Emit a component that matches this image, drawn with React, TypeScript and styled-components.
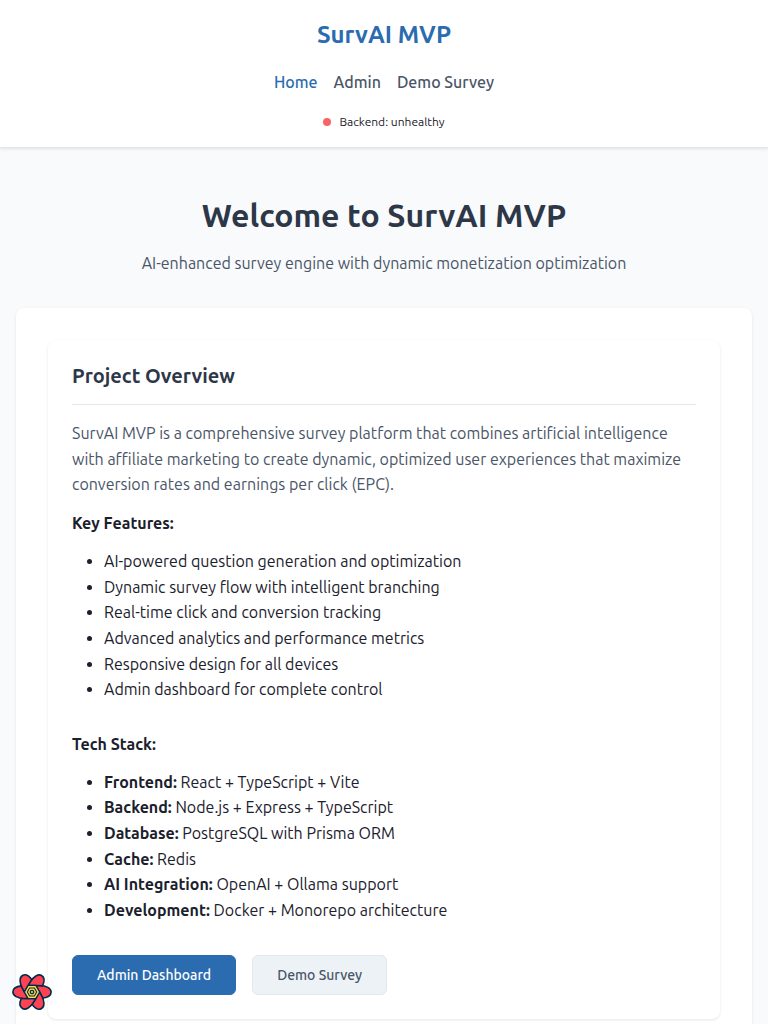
import React from 'react';
import styled, { createGlobalStyle, css } from 'styled-components';

const GlobalStyle = createGlobalStyle`
  *, *::before, *::after { box-sizing: border-box; margin: 0; padding: 0; }
  body {
    font-family: Ubuntu, "Open Sans", "Noto Sans", sans-serif;
    font-size: 16px;
    line-height: 1.6;
    color: #1a202c;
    background: #f8fafc;
  }
`;

const Header = styled.header`
  display: flex;
  flex-direction: column;
  align-items: center;
  gap: 16px;
  padding: 16px;
  background: #fff;
  border-bottom: 1px solid #e2e8f0;
  box-shadow: 0 1px 3px rgba(0, 0, 0, 0.1);
`;

const Brand = styled.div`
  font-size: 24px;
  font-weight: 700;
  color: #2b6cb0;
`;

const Nav = styled.nav`
  display: flex;
  gap: 16px;
`;

const NavLink = styled.a<{ $active?: boolean }>`
  font-weight: 500;
  text-decoration: none;
  color: ${({ $active }) => ($active ? '#2b6cb0' : '#4a5568')};
`;

const Status = styled.div`
  display: flex;
  align-items: center;
  gap: 8px;
  font-size: 12px;
`;

const StatusDot = styled.span`
  width: 8px;
  height: 8px;
  border-radius: 50%;
  background: #f56565;
`;

const Main = styled.main`
  padding: 48px 16px 32px;
`;

const Hero = styled.section`
  margin-bottom: 32px;
  text-align: center;
`;

const Title = styled.h1`
  margin-bottom: 16px;
  font-size: 32px;
  font-weight: 700;
  line-height: 1.2;
  color: #2d3748;
`;

const Subtitle = styled.p`
  color: #4a5568;
`;

const Panel = styled.section`
  padding: 32px;
  border-radius: 8px;
  background: #fff;
  box-shadow: 0 1px 3px rgba(0, 0, 0, 0.1);
`;

const Card = styled.article`
  padding: 24px;
  border-radius: 8px;
  background: #fff;
  box-shadow: 0 1px 3px rgba(0, 0, 0, 0.1);
`;

const CardTitle = styled.h2`
  margin-bottom: 16px;
  padding-bottom: 16px;
  border-bottom: 1px solid #e2e8f0;
  font-size: 20px;
  font-weight: 600;
  line-height: 1.2;
  color: #2d3748;
`;

const Summary = styled.p`
  margin-bottom: 12.8px;
  color: #4a5568;
`;

const ListHeading = styled.p<{ $tight?: boolean }>`
  margin-bottom: ${({ $tight }) => ($tight ? '12px' : '12.8px')};
  font-weight: 700;
`;

const List = styled.ul<{ $last?: boolean }>`
  margin-bottom: ${({ $last }) => ($last ? '32px' : '29.6px')};
  padding-left: 32px;
`;

const Actions = styled.div`
  display: flex;
  gap: 16px;
`;

const Button = styled.button<{ $primary?: boolean }>`
  height: 40px;
  padding: 0 24px;
  border: 1px solid #e2e8f0;
  border-radius: 6px;
  font: 500 14px/1 Ubuntu, "Open Sans", "Noto Sans", sans-serif;
  color: #4a5568;
  background: #edf2f7;
  ${({ $primary }) =>
    $primary &&
    css`
      border-color: #2b6cb0;
      color: #fff;
      background: #2b6cb0;
    `}
`;

const DevtoolsToggle = styled.button`
  position: fixed;
  left: 12px;
  bottom: 12px;
  width: 40px;
  height: 40px;
  border: 0;
  background: none;

  svg { display: block; }
`;

const petal =
  'M3.75 -6.5L8 -6.5C14 -6.4 19.1 -3.8 19.1 0C19.1 3.5 15.4 5.6 10.6 6.1L7.5 0Z';

function hexagon(r: number) {
  return [0, 60, 120, 180, 240, 300]
    .map((d) => `${(r * Math.cos((d * Math.PI) / 180)).toFixed(2)},${(r * Math.sin((d * Math.PI) / 180)).toFixed(2)}`)
    .join(' ');
}

function FlowerIcon() {
  return (
    <svg width="40" height="40" viewBox="-20 -20 40 40" strokeLinejoin="round">
      <g fill="#ff4154" stroke="#002c4b" strokeWidth="1.6">
        {[0, 60, 120, 180, 240, 300].map((d) => (
          <path key={d} d={petal} transform={`rotate(${d})`} />
        ))}
      </g>
      <polygon points={hexagon(7.6)} fill="#ffd94c" stroke="#002c4b" strokeWidth="1.2" />
      <polygon points={hexagon(4.7)} fill="#ffd94c" stroke="#002c4b" strokeWidth="1.1" />
      <circle r="1.7" fill="#ffd94c" stroke="#002c4b" strokeWidth="1.3" />
    </svg>
  );
}

const features = [
  'AI-powered question generation and optimization',
  'Dynamic survey flow with intelligent branching',
  'Real-time click and conversion tracking',
  'Advanced analytics and performance metrics',
  'Responsive design for all devices',
  'Admin dashboard for complete control',
];

const stack = [
  ['Frontend:', 'React + TypeScript + Vite'],
  ['Backend:', 'Node.js + Express + TypeScript'],
  ['Database:', 'PostgreSQL with Prisma ORM'],
  ['Cache:', 'Redis'],
  ['AI Integration:', 'OpenAI + Ollama support'],
  ['Development:', 'Docker + Monorepo architecture'],
];

export default function App() {
  return (
    <>
      <GlobalStyle />
      <Header>
        <Brand>SurvAI MVP</Brand>
        <Nav>
          <NavLink $active>Home</NavLink>
          <NavLink>Admin</NavLink>
          <NavLink>Demo Survey</NavLink>
        </Nav>
        <Status>
          <StatusDot />
          <span>Backend: unhealthy</span>
        </Status>
      </Header>
      <Main>
        <Hero>
          <Title>Welcome to SurvAI MVP</Title>
          <Subtitle>AI-enhanced survey engine with dynamic monetization optimization</Subtitle>
        </Hero>
        <Panel>
          <Card>
            <CardTitle>Project Overview</CardTitle>
            <Summary>
              SurvAI MVP is a comprehensive survey platform that combines artificial intelligence with
              affiliate marketing to create dynamic, optimized user experiences that maximize conversion
              rates and earnings per click (EPC).
            </Summary>
            <ListHeading>Key Features:</ListHeading>
            <List>
              {features.map((text) => (
                <li key={text}>{text}</li>
              ))}
            </List>
            <ListHeading $tight>Tech Stack:</ListHeading>
            <List $last>
              {stack.map(([name, text]) => (
                <li key={name}>
                  <strong>{name}</strong> {text}
                </li>
              ))}
            </List>
            <Actions>
              <Button $primary>Admin Dashboard</Button>
              <Button>Demo Survey</Button>
            </Actions>
          </Card>
        </Panel>
      </Main>
      <DevtoolsToggle aria-label="Open query devtools">
        <FlowerIcon />
      </DevtoolsToggle>
    </>
  );
}
